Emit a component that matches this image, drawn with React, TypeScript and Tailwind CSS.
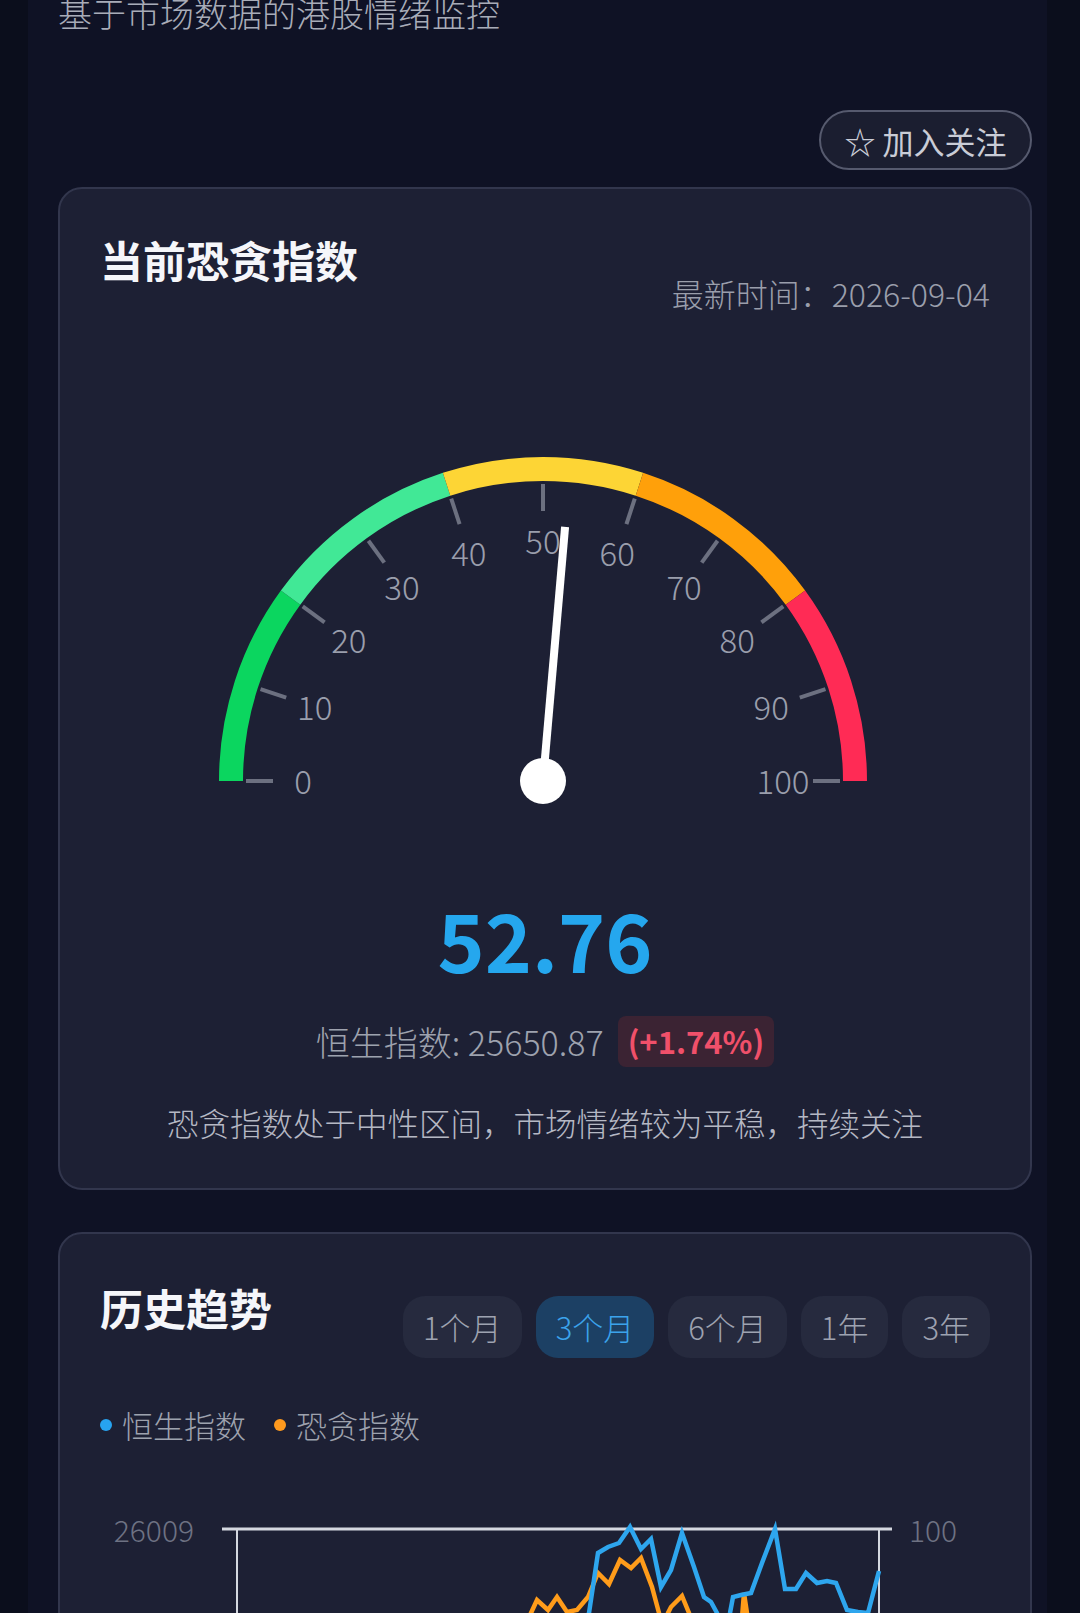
import React from "react";

const CX = 543;
const CY = 781;

function polar(v: number, r: number) {
  const a = Math.PI * (1 - v / 100);
  return [CX + r * Math.cos(a), CY - r * Math.sin(a)];
}

function arcPath(v0: number, v1: number, r: number) {
  const [x0, y0] = polar(v0, r);
  const [x1, y1] = polar(v1, r);
  return `M ${x0} ${y0} A ${r} ${r} 0 0 1 ${x1} ${y1}`;
}

const segments: [number, number, string][] = [
  [0, 20, "#0bd65f"],
  [20, 40, "#41e896"],
  [40, 60, "#fdd535"],
  [60, 80, "#ffa00a"],
  [80, 100, "#ff2b55"],
];

const value = 52.76;

function Gauge() {
  const ticks = Array.from({ length: 11 }, (_, i) => i * 10);
  const [nx, ny] = polar(value, 255);
  return (
    <svg width="680" height="380" viewBox="205 440 680 380" className="block">
      {segments.map(([a, b, c]) => (
        <path key={a} d={arcPath(a, b, 312)} stroke={c} strokeWidth="24" fill="none" />
      ))}
      {ticks.map((t) => {
        const [x0, y0] = polar(t, 270);
        const [x1, y1] = polar(t, 297);
        const [lx, ly] = polar(t, 240);
        return (
          <g key={t}>
            <line x1={x0} y1={y0} x2={x1} y2={y1} stroke="#6c7080" strokeWidth="4" />
            <text
              x={lx}
              y={ly - 1}
              fill="#9a9eac"
              fontSize="33"
              fontWeight="300"
              textAnchor="middle"
              dominantBaseline="central"
            >
              {t}
            </text>
          </g>
        );
      })}
      <line x1={CX} y1={CY} x2={nx} y2={ny} stroke="#ffffff" strokeWidth="8" />
      <circle cx={CX} cy={CY} r="23" fill="#ffffff" />
    </svg>
  );
}

const bluePts = [
  [237, 1760], [280, 1740], [320, 1752], [360, 1730], [400, 1745], [440, 1720], [480, 1735],
  [520, 1700], [550, 1690], [575, 1660], [589, 1613], [598, 1553], [608, 1547], [619, 1543],
  [630, 1527], [641, 1549], [651, 1539], [661, 1587], [671, 1570], [682, 1533], [694, 1567],
  [704, 1597], [711, 1602], [717, 1613], [723, 1640], [730, 1613], [733, 1597], [741, 1595],
  [751, 1593], [762, 1563], [775, 1529], [785, 1589], [796, 1589], [806, 1573], [817, 1583],
  [827, 1581], [836, 1583], [847, 1610], [858, 1612], [868, 1613], [879, 1571],
];

const orangePts = [
  [237, 1730], [280, 1745], [320, 1720], [360, 1740], [400, 1710], [440, 1725], [480, 1690],
  [510, 1660], [531, 1613], [537, 1600], [548, 1610], [557, 1597], [567, 1612], [577, 1610],
  [588, 1597], [598, 1573], [609, 1584], [620, 1560], [631, 1568], [641, 1558], [652, 1587],
  [659, 1613], [664, 1640], [668, 1613], [671, 1607], [682, 1596], [689, 1613], [700, 1650],
  [720, 1660], [741, 1630], [744, 1593], [747, 1613], [760, 1660], [800, 1680], [840, 1670],
  [879, 1650],
];

const toPoints = (p: number[][]) => p.map(([x, y]) => `${x},${y}`).join(" ");

function TrendChart() {
  return (
    <svg width="890" height="400" viewBox="100 1470 890 400" className="block">
      <text x="194" y="1529" fill="#6e7283" fontSize="30" fontWeight="300" textAnchor="end" dominantBaseline="central">
        26009
      </text>
      <text x="909" y="1529" fill="#6e7283" fontSize="30" fontWeight="300" dominantBaseline="central">
        100
      </text>
      <line x1="222" y1="1529" x2="892" y2="1529" stroke="#d5d8e0" strokeWidth="3" />
      <line x1="237" y1="1529" x2="237" y2="1870" stroke="#d5d8e0" strokeWidth="2" />
      <line x1="879" y1="1529" x2="879" y2="1870" stroke="#d5d8e0" strokeWidth="2" />
      <polyline points={toPoints(orangePts)} fill="none" stroke="#ff9c1a" strokeWidth="4.5" strokeLinejoin="miter" />
      <polyline points={toPoints(bluePts)} fill="none" stroke="#2ea6ee" strokeWidth="4.5" strokeLinejoin="miter" />
    </svg>
  );
}

const ranges = ["1个月", "3个月", "6个月", "1年", "3年"];

export default function App() {
  return (
    <div className="min-h-screen bg-[#0b0e1c] font-['Noto_Sans_CJK_SC','Noto_Sans',sans-serif] overflow-hidden">
      <div className="ml-[28px] w-[1019px] min-h-[1613px] bg-[#0f1225] pl-[30px] pr-[15px]">
        {/* subtitle, page is scrolled so it's clipped at the top */}
        <p className="-mt-[4px] text-[34px] leading-[34px] font-light text-[#a8acb8]">
          基于市场数据的港股情绪监控
        </p>

        <div className="flex justify-end mt-[80px]">
          <button className="w-[213px] h-[60px] rounded-full border-2 border-[#565a6e] bg-[#1b1e30] text-[31px] leading-none text-[#c9ccd6] flex items-center justify-center">
            ☆ 加入关注
          </button>
        </div>

        {/* current index card */}
        <div className="mt-[17px] rounded-[24px] border-2 border-[#32364d] bg-[#1d2034] px-[40px] pt-[48px] pb-[50px]">
          <div className="flex justify-between items-start">
            <h2 className="text-[43px] leading-[44px] font-bold text-[#f5f6fa]">当前恐贪指数</h2>
            <span className="mt-[40px] text-[32px] leading-[32px] font-light text-[#9a9eab]">
              最新时间：2026-09-04
            </span>
          </div>

          <div className="mt-[131px] flex justify-center">
            <Gauge />
          </div>

          <div className="mt-[78px] text-center text-[80px] leading-[80px] font-bold text-[#25a7ee]">
            52.76
          </div>

          <div className="mt-[38px] flex items-center justify-center gap-[14px]">
            <span className="text-[34px] leading-[34px] font-light text-[#9ea2ae]">恒生指数: 25650.87</span>
            <span className="h-[51px] px-[10px] rounded-[8px] bg-[#3b2333] text-[31px] font-semibold text-[#f0506a] flex items-center">
              (+1.74%)
            </span>
          </div>

          <p className="mt-[39px] text-center text-[31.5px] leading-[32px] font-light text-[#b5b8c4]">
            恐贪指数处于中性区间，市场情绪较为平稳，持续关注
          </p>
        </div>

        {/* history card */}
        <div className="mt-[42px] rounded-[24px] border-2 border-[#32364d] bg-[#1d2034] px-[40px] pt-[51px] pb-[40px]">
          <div className="flex justify-between items-start">
            <h2 className="text-[43px] leading-[44px] font-bold text-[#f5f6fa]">历史趋势</h2>
            <div className="mt-[11px] flex gap-[14px]">
              {ranges.map((r, i) => (
                <span
                  key={r}
                  className={
                    i === 1
                      ? "h-[62px] px-[20px] rounded-[22px] bg-[#1c4064] text-[#3ba3ec] text-[31px] font-light flex items-center"
                      : "h-[62px] px-[20px] rounded-[22px] bg-[#262a3e] text-[#9ea2b0] text-[31px] font-light flex items-center"
                  }
                >
                  {r}
                </span>
              ))}
            </div>
          </div>

          <div className="mt-[51px] flex items-center text-[31px] leading-[31px] font-light text-[#9ea2ae]">
            <span className="w-[12px] h-[12px] rounded-full bg-[#27a3f0]" />
            <span className="ml-[10px]">恒生指数</span>
            <span className="ml-[28px] w-[12px] h-[12px] rounded-full bg-[#ff9a1e]" />
            <span className="ml-[10px]">恐贪指数</span>
          </div>

          <div className="mt-[30px]">
            <TrendChart />
          </div>
        </div>
      </div>
    </div>
  );
}
